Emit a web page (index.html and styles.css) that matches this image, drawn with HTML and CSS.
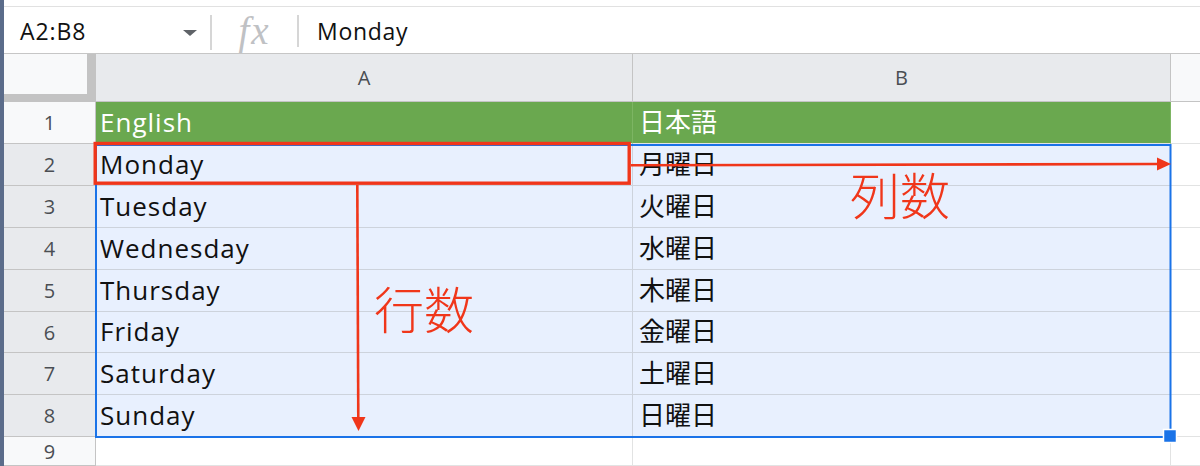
FILE: index.html
```html
<!DOCTYPE html>
<html lang="ja">
<head>
<meta charset="utf-8">
<title>Sheet</title>
<link rel="stylesheet" href="styles.css">
</head>
<body>
<div class="app">
  <div class="edge"></div>
  <div class="main">
    <div class="formula-bar">
      <div class="namebox"><span class="range">A2:B8</span><span class="caret"></span></div>
      <div class="sep"></div>
      <div class="fx">fx</div>
      <div class="sep sep2"></div>
      <div class="formula-text">Monday</div>
    </div>
    <div class="sheet">
      <div class="corner"></div>
      <div class="colhead sel">A</div>
      <div class="colhead sel">B</div>
      <div class="colhead rest"></div>

      <div class="rowhead">1</div>
      <div class="cell en green">English</div>
      <div class="cell ja green">日本語</div>
      <div class="cell blank"></div>

      <div class="rowhead sel">2</div>
      <div class="cell en sel">Monday</div>
      <div class="cell ja sel">月曜日</div>
      <div class="cell blank"></div>

      <div class="rowhead sel">3</div>
      <div class="cell en sel">Tuesday</div>
      <div class="cell ja sel">火曜日</div>
      <div class="cell blank"></div>

      <div class="rowhead sel">4</div>
      <div class="cell en sel">Wednesday</div>
      <div class="cell ja sel">水曜日</div>
      <div class="cell blank"></div>

      <div class="rowhead sel">5</div>
      <div class="cell en sel">Thursday</div>
      <div class="cell ja sel">木曜日</div>
      <div class="cell blank"></div>

      <div class="rowhead sel">6</div>
      <div class="cell en sel">Friday</div>
      <div class="cell ja sel">金曜日</div>
      <div class="cell blank"></div>

      <div class="rowhead sel">7</div>
      <div class="cell en sel">Saturday</div>
      <div class="cell ja sel">土曜日</div>
      <div class="cell blank"></div>

      <div class="rowhead sel">8</div>
      <div class="cell en sel">Sunday</div>
      <div class="cell ja sel">日曜日</div>
      <div class="cell blank"></div>

      <div class="rowhead">9</div>
      <div class="cell"></div>
      <div class="cell"></div>
      <div class="cell blank"></div>
    </div>
  </div>
</div>

<svg class="overlay" width="1200" height="466" viewBox="0 0 1200 466" xmlns="http://www.w3.org/2000/svg">
  <rect x="96" y="145" width="1074.5" height="292" fill="none" stroke="#1a73e8" stroke-width="2"/>
  <rect x="1163.5" y="429.5" width="13" height="13" fill="#1a73e8" stroke="#ffffff" stroke-width="1.5"/>
  <rect x="95.2" y="143.5" width="534" height="39.7" fill="none" stroke="#f0361a" stroke-width="3.4"/>
  <line x1="631" y1="165.3" x2="1158" y2="164" stroke="#f0361a" stroke-width="2.6"/>
  <polygon points="1157,157.5 1171,164 1157,170.5" fill="#f0361a"/>
  <line x1="357.3" y1="185" x2="358.3" y2="418" stroke="#f0361a" stroke-width="2.6"/>
  <polygon points="351.5,417 365.5,417 358.5,431" fill="#f0361a"/>
</svg>
<div class="label cols">列数</div>
<div class="label rows">行数</div>
</body>
</html>
```

FILE: styles.css
```css
* { box-sizing: border-box; margin: 0; padding: 0; }
html, body { width: 1200px; height: 466px; overflow: hidden; background: #ffffff; }
body { position: relative; font-family: "Open Sans", "Noto Sans CJK JP", sans-serif; color: #111111; }

.app { display: flex; height: 466px; }
.edge { width: 4px; flex: none; background: #5b6c8a; }
.main { flex: 1; display: flex; flex-direction: column; min-width: 0; }

/* formula bar */
.formula-bar {
  flex: none;
  margin-top: 6px;
  height: 48px;
  border-top: 1px solid #e1e1e1;
  border-bottom: 1px solid #c6c6c6;
  display: flex;
  align-items: flex-start;
}
.namebox {
  width: 206px;
  height: 100%;
  display: flex;
  align-items: center;
  justify-content: space-between;
  padding: 2px 13px 0 16px;
}
.range { font-size: 23px; line-height: 23px; letter-spacing: 0.9px; color: #111; }
.caret {
  width: 0; height: 0;
  border-left: 7.5px solid transparent;
  border-right: 7.5px solid transparent;
  border-top: 6px solid #5f6368;
  margin-top: 3px;
}
.sep { flex: none; width: 2px; height: 35px; margin-top: 8px; background: #d6d6d6; }
.sep2 { height: 32px; }
.fx {
  width: 85px;
  height: 100%;
  display: flex;
  align-items: center;
  justify-content: center;
  font-family: "Liberation Serif", serif;
  font-style: italic;
  font-size: 39px;
  letter-spacing: 2px;
  color: #bfc1c4;
}
.formula-text {
  height: 100%;
  display: flex;
  align-items: center;
  padding: 2px 0 0 18px;
  font-size: 23px;
  line-height: 23px;
  letter-spacing: 0.7px;
  color: #111;
}

/* grid */
.sheet {
  flex: 1;
  display: grid;
  grid-template-columns: 92px 537px 538px 1fr;
  grid-template-rows: 48px repeat(5, 42px) 41px 42px 42px 1fr;
}
.corner {
  background: #f8f9fa;
  border-right: 9px solid #c3c3c3;
  border-bottom: 8px solid #c3c3c3;
}
.colhead {
  display: flex;
  align-items: center;
  justify-content: center;
  font-size: 20px;
  color: #4a4e53;
  background: #f8f9fa;
  border-right: 1px solid #c4c4c4;
  border-bottom: 1px solid #c4c4c4;
}
.colhead.sel { background: #e8eaed; }
.colhead.rest { border-right: 0; }
.rowhead {
  display: flex;
  align-items: center;
  justify-content: center;
  font-size: 20px;
  color: #4a4e53;
  background: #f8f9fa;
  border-right: 1px solid #c4c4c4;
  border-bottom: 1px solid #c4c4c4;
}
.rowhead.sel { background: #e8eaed; }

.cell {
  display: flex;
  align-items: flex-end;
  white-space: nowrap;
  font-size: 26px;
  line-height: 26px;
  border-right: 1px solid #e2e3e3;
  border-bottom: 1px solid #e2e3e3;
}
.cell.en { padding: 0 0 8px 4px; letter-spacing: 1px; }
.cell.ja { font-family: "Noto Sans CJK JP", sans-serif; padding: 0 0 9px 6px; }
.cell.green { background: #6aa84f; color: #ffffff; border-right-color: #7db563; }
.cell.sel { background: #e8f0fe; border-color: #cdd3dc; }
.cell.blank { border-right: 0; }

/* annotations over the sheet */
.overlay { position: absolute; left: 0; top: 0; pointer-events: none; }
.label {
  position: absolute;
  font-family: "Noto Sans CJK JP", sans-serif;
  font-weight: 300;
  font-size: 50px;
  line-height: 50px;
  color: #f0361a;
}
.label.cols { left: 850px; top: 168px; }
.label.rows { left: 374px; top: 282px; }
```
